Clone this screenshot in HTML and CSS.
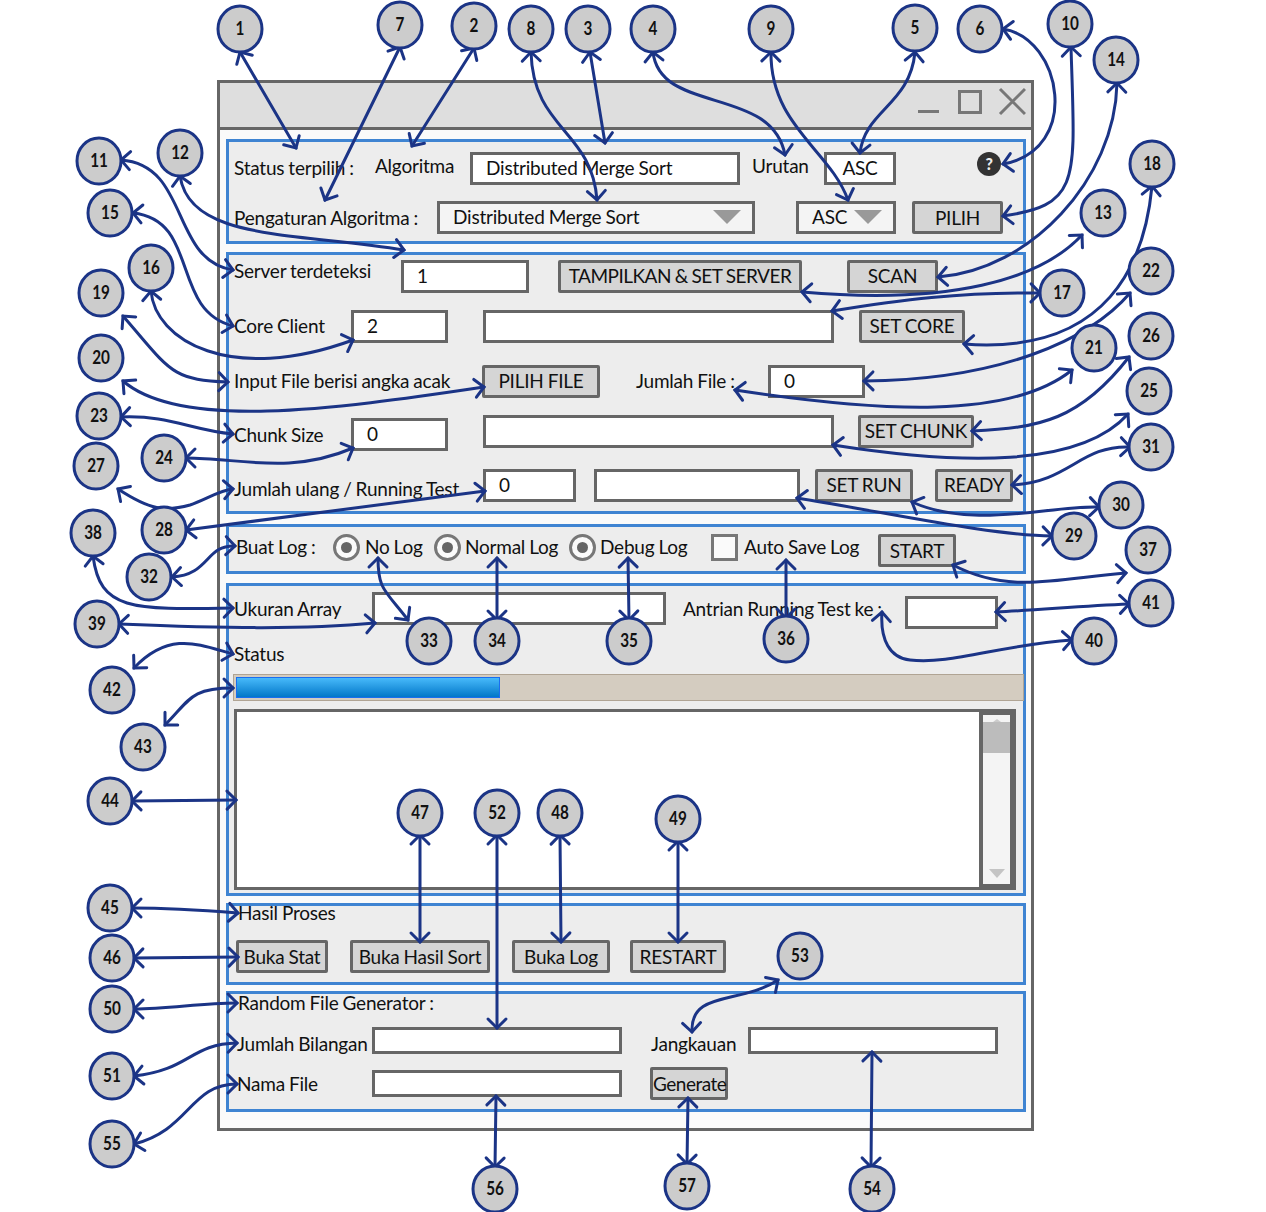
FILE: index.html
```html
<!DOCTYPE html>
<html lang="id">
<head>
<meta charset="utf-8">
<title>Antarmuka Distributed Merge Sort</title>
<link rel="stylesheet" href="styles.css">
</head>
<body>
<div class="stage">
  <div class="window">
    <div class="titlebar">
      <svg class="winctl" width="110" height="44" viewBox="0 0 110 44">
        <path d="M2 28.500H23" class="ctl"/>
        <rect x="43.500" y="8.500" width="21" height="21" class="ctl"/>
        <path d="M84 6L109 31M109 6L84 31" class="ctl"/>
      </svg>
    </div>

    <section class="panel p1">
      <div class="row">
        <span class="w141 up2">Status terpilih :</span>
        <span class="w95 up5">Algoritma</span>
        <div class="field w270">Distributed Merge Sort</div>
        <span class="ml12 w72 up5">Urutan</span>
        <div class="field center w72">ASC</div>
        <span class="help ml81">?</span>
      </div>
      <div class="row mt16">
        <span class="w203">Pengaturan Algoritma :</span>
        <div class="field combo w318">Distributed Merge Sort<i class="tri"></i></div>
        <div class="field combo short ml41 w100">ASC<i class="tri"></i></div>
        <button class="btn ml16 w91">PILIH</button>
      </div>
    </section>

    <section class="panel p2">
      <div class="row">
        <span class="w167 up10">Server terdeteksi</span>
        <div class="field w128">1</div>
        <button class="btn ml29 w244 tamp">TAMPILKAN &amp; SET SERVER</button>
        <button class="btn ml45 w91">SCAN</button>
      </div>
      <div class="row mt16">
        <span class="w117">Core Client</span>
        <div class="field w97">2</div>
        <div class="field ml35 w351"></div>
        <button class="btn ml25 w106">SET CORE</button>
      </div>
      <div class="row mt21">
        <span class="w248">Input File berisi angka acak</span>
        <button class="btn w118">PILIH FILE</button>
        <span class="ml36 w132">Jumlah File :</span>
        <div class="field w97">0</div>
      </div>
      <div class="row mt16">
        <span class="w117 dn8">Chunk Size</span>
        <div class="field w97 shift">0</div>
        <div class="field ml35 w351"></div>
        <button class="btn ml24 w116">SET CHUNK</button>
      </div>
      <div class="row mt20">
        <span class="w249 dn8">Jumlah ulang / Running Test</span>
        <div class="field w93">0</div>
        <div class="field ml18 w206"></div>
        <button class="btn ml15 w98">SET RUN</button>
        <button class="btn ml22 w78">READY</button>
      </div>
    </section>

    <section class="panel p3">
      <div class="row logs">
        <span class="w97">Buat Log :</span>
        <span class="radio"></span><span class="ml5 w69">No Log</span>
        <span class="radio"></span><span class="ml4 w104">Normal Log</span>
        <span class="radio"></span><span class="ml4 w111">Debug Log</span>
        <span class="check"></span><span class="ml6 w134">Auto Save Log</span>
        <button class="btn w78">START</button>
      </div>
    </section>

    <section class="panel p4">
      <div class="row top">
        <span class="w138 lift">Ukuran Array</span>
        <div class="field w294"></div>
        <span class="ml17 w222 lift">Antrian Running Test ke :</span>
        <div class="field w93 mt4"></div>
      </div>
      <div class="status">Status</div>
      <div class="progress"><div class="bar"></div></div>
      <div class="logbox">
        <div class="scroll">
          <i class="up"></i>
          <div class="thumb"></div>
          <i class="down"></i>
        </div>
      </div>
    </section>

    <section class="panel p5">
      <div class="cap">Hasil Proses</div>
      <div class="row btnrow">
        <button class="btn w92">Buka Stat</button>
        <button class="btn ml22 w140">Buka Hasil Sort</button>
        <button class="btn ml22 w98">Buka Log</button>
        <button class="btn ml20 w96">RESTART</button>
      </div>
    </section>

    <section class="panel p6">
      <div class="cap">Random File Generator :</div>
      <div class="row low mt15">
        <span class="w135 dn6">Jumlah Bilangan</span>
        <div class="field w250"></div>
        <span class="ml29 w97 dn6">Jangkauan</span>
        <div class="field w250"></div>
      </div>
      <div class="row mt13">
        <span class="w135">Nama File</span>
        <div class="field low w250"></div>
        <button class="btn ml28 w78 tight">Generate</button>
      </div>
    </section>
  </div>

  <svg class="notes" width="1266" height="1212" viewBox="0 0 1266 1212">
    <defs>
      <marker id="head" markerUnits="userSpaceOnUse" markerWidth="24" markerHeight="24" refX="16" refY="12" orient="auto-start-reverse">
        <path d="M7 3L16 12L7 21" class="headline"/>
      </marker>
    </defs>
    <g class="arrows">
      <path d="M240 52L296 148"/>
      <path d="M400 47L325 200"/>
      <path d="M474 48L412 146"/>
      <path d="M531 52C533 130 592 130 597 200"/>
      <path d="M590 52L605 143"/>
      <path d="M653 52C660 115 772 85 785 155"/>
      <path d="M771 52C770 125 830 150 848 200"/>
      <path d="M915 52C910 105 865 110 860 153"/>
      <path d="M1003 29C1062 38 1082 150 1003 164"/>
      <path d="M1071 47C1075 180 1082 205 1003 216"/>
      <path d="M1117 83C1115 180 1030 270 938 277"/>
      <path d="M1082 235C1040 280 950 305 802 292"/>
      <path d="M1040 293C960 292 900 300 832 311"/>
      <path d="M1152 186C1145 260 1110 355 964 344"/>
      <path d="M1130 293C1090 340 1000 380 864 381"/>
      <path d="M1072 370C1010 420 880 412 735 390"/>
      <path d="M1129 357C1080 420 1040 428 972 431"/>
      <path d="M1128 414C1080 468 960 465 833 445"/>
      <path d="M1130 447C1080 445 1070 482 1012 485"/>
      <path d="M1099 507C1050 505 975 530 912 502"/>
      <path d="M1052 536C990 535 900 515 797 498"/>
      <path d="M1126 573C1060 578 1010 595 953 565"/>
      <path d="M1129 604C1080 606 1040 610 996 612"/>
      <path d="M1072 640C1000 645 950 665 910 660C890 658 880 640 882 612"/>
      <path d="M121 160C190 165 170 260 233 270"/>
      <path d="M180 176C190 240 290 232 404 250"/>
      <path d="M133 213C200 220 170 310 233 326"/>
      <path d="M151 291C155 340 230 385 353 340"/>
      <path d="M123 316C170 370 170 380 228 382"/>
      <path d="M123 381C180 430 330 410 484 387"/>
      <path d="M121 417C170 415 190 430 233 434"/>
      <path d="M186 458C240 458 290 475 353 448"/>
      <path d="M118 489C150 510 165 512 190 505C205 500 220 490 233 489"/>
      <path d="M186 530L485 491"/>
      <path d="M93 556C100 610 130 610 233 608"/>
      <path d="M172 577C210 575 205 545 235 546"/>
      <path d="M119 624C220 628 300 630 375 623"/>
      <path d="M378 558C378 590 385 590 408 620"/>
      <path d="M497 558L497 620"/>
      <path d="M628 558L629 620"/>
      <path d="M786 560L786 618"/>
      <path d="M134 668C170 630 200 645 233 654"/>
      <path d="M165 725C190 700 190 688 233 688"/>
      <path d="M132 801L236 800"/>
      <path d="M420 835L420 942"/>
      <path d="M497 835L497 1028"/>
      <path d="M560 835L561 942"/>
      <path d="M678 841L678 942"/>
      <path d="M132 908C170 908 200 910 238 913"/>
      <path d="M134 958L238 957"/>
      <path d="M134 1009C170 1009 200 1003 237 1003"/>
      <path d="M134 1076C190 1070 190 1044 237 1043"/>
      <path d="M134 1144C190 1130 190 1084 237 1084"/>
      <path d="M495 1167L496 1096"/>
      <path d="M687 1164L688 1098"/>
      <path d="M871 1167L872 1052"/>
      <path d="M778 980C740 1005 690 990 692 1032"/>
    </g>
    <g class="nodes">
      <ellipse cx="240" cy="29" rx="22" ry="23"/><text x="240" y="29">1</text>
      <ellipse cx="400" cy="25" rx="22" ry="23"/><text x="400" y="25">7</text>
      <ellipse cx="474" cy="26" rx="22" ry="23"/><text x="474" y="26">2</text>
      <ellipse cx="531" cy="29" rx="22" ry="23"/><text x="531" y="29">8</text>
      <ellipse cx="588" cy="29" rx="22" ry="23"/><text x="588" y="29">3</text>
      <ellipse cx="653" cy="29" rx="22" ry="23"/><text x="653" y="29">4</text>
      <ellipse cx="771" cy="29" rx="22" ry="23"/><text x="771" y="29">9</text>
      <ellipse cx="915" cy="28" rx="22" ry="23"/><text x="915" y="28">5</text>
      <ellipse cx="980" cy="29" rx="22" ry="23"/><text x="980" y="29">6</text>
      <ellipse cx="1070" cy="24" rx="22" ry="23"/><text x="1070" y="24">10</text>
      <ellipse cx="1116" cy="60" rx="22" ry="23"/><text x="1116" y="60">14</text>
      <ellipse cx="1152" cy="164" rx="22" ry="23"/><text x="1152" y="164">18</text>
      <ellipse cx="1103" cy="213" rx="22" ry="23"/><text x="1103" y="213">13</text>
      <ellipse cx="1151" cy="271" rx="22" ry="23"/><text x="1151" y="271">22</text>
      <ellipse cx="1062" cy="293" rx="22" ry="23"/><text x="1062" y="293">17</text>
      <ellipse cx="1151" cy="336" rx="22" ry="23"/><text x="1151" y="336">26</text>
      <ellipse cx="1094" cy="348" rx="22" ry="23"/><text x="1094" y="348">21</text>
      <ellipse cx="1149" cy="391" rx="22" ry="23"/><text x="1149" y="391">25</text>
      <ellipse cx="1151" cy="447" rx="22" ry="23"/><text x="1151" y="447">31</text>
      <ellipse cx="1121" cy="505" rx="22" ry="23"/><text x="1121" y="505">30</text>
      <ellipse cx="1074" cy="536" rx="22" ry="23"/><text x="1074" y="536">29</text>
      <ellipse cx="1148" cy="550" rx="22" ry="23"/><text x="1148" y="550">37</text>
      <ellipse cx="1151" cy="603" rx="22" ry="23"/><text x="1151" y="603">41</text>
      <ellipse cx="1094" cy="641" rx="22" ry="23"/><text x="1094" y="641">40</text>
      <ellipse cx="99" cy="161" rx="22" ry="23"/><text x="99" y="161">11</text>
      <ellipse cx="180" cy="153" rx="22" ry="23"/><text x="180" y="153">12</text>
      <ellipse cx="110" cy="213" rx="22" ry="23"/><text x="110" y="213">15</text>
      <ellipse cx="151" cy="268" rx="22" ry="23"/><text x="151" y="268">16</text>
      <ellipse cx="101" cy="293" rx="22" ry="23"/><text x="101" y="293">19</text>
      <ellipse cx="101" cy="358" rx="22" ry="23"/><text x="101" y="358">20</text>
      <ellipse cx="99" cy="416" rx="22" ry="23"/><text x="99" y="416">23</text>
      <ellipse cx="164" cy="458" rx="22" ry="23"/><text x="164" y="458">24</text>
      <ellipse cx="96" cy="466" rx="22" ry="23"/><text x="96" y="466">27</text>
      <ellipse cx="164" cy="530" rx="22" ry="23"/><text x="164" y="530">28</text>
      <ellipse cx="93" cy="533" rx="22" ry="23"/><text x="93" y="533">38</text>
      <ellipse cx="149" cy="577" rx="22" ry="23"/><text x="149" y="577">32</text>
      <ellipse cx="97" cy="624" rx="22" ry="23"/><text x="97" y="624">39</text>
      <ellipse cx="429" cy="641" rx="22" ry="23"/><text x="429" y="641">33</text>
      <ellipse cx="497" cy="641" rx="22" ry="23"/><text x="497" y="641">34</text>
      <ellipse cx="629" cy="641" rx="22" ry="23"/><text x="629" y="641">35</text>
      <ellipse cx="786" cy="639" rx="22" ry="23"/><text x="786" y="639">36</text>
      <ellipse cx="112" cy="690" rx="22" ry="23"/><text x="112" y="690">42</text>
      <ellipse cx="143" cy="747" rx="22" ry="23"/><text x="143" y="747">43</text>
      <ellipse cx="110" cy="801" rx="22" ry="23"/><text x="110" y="801">44</text>
      <ellipse cx="420" cy="813" rx="22" ry="23"/><text x="420" y="813">47</text>
      <ellipse cx="497" cy="813" rx="22" ry="23"/><text x="497" y="813">52</text>
      <ellipse cx="560" cy="813" rx="22" ry="23"/><text x="560" y="813">48</text>
      <ellipse cx="678" cy="819" rx="22" ry="23"/><text x="678" y="819">49</text>
      <ellipse cx="110" cy="908" rx="22" ry="23"/><text x="110" y="908">45</text>
      <ellipse cx="112" cy="958" rx="22" ry="23"/><text x="112" y="958">46</text>
      <ellipse cx="800" cy="956" rx="22" ry="23"/><text x="800" y="956">53</text>
      <ellipse cx="112" cy="1009" rx="22" ry="23"/><text x="112" y="1009">50</text>
      <ellipse cx="112" cy="1076" rx="22" ry="23"/><text x="112" y="1076">51</text>
      <ellipse cx="112" cy="1144" rx="22" ry="23"/><text x="112" y="1144">55</text>
      <ellipse cx="495" cy="1189" rx="22" ry="23"/><text x="495" y="1189">56</text>
      <ellipse cx="687" cy="1186" rx="22" ry="23"/><text x="687" y="1186">57</text>
      <ellipse cx="872" cy="1189" rx="22" ry="23"/><text x="872" y="1189">54</text>
    </g>
  </svg>
</div>
</body>
</html>
```

FILE: styles.css
```css
* { box-sizing: border-box; }
html, body { margin: 0; padding: 0; background: #fff; }
body { font: 19px/24px Lato, "Open Sans", sans-serif; letter-spacing: -0.22px; word-spacing: -0.6px; color: #111; }
.stage { position: relative; width: 1266px; height: 1212px; overflow: hidden; }

.window { position: absolute; left: 217px; top: 80px; width: 817px; height: 1051px; border: 3px solid #666; background: #fafafa; }
.titlebar { height: 47px; background: #dedede; border-bottom: 3px solid #666; display: flex; justify-content: flex-end; }
.winctl { margin: 0 5px 0 0; flex: none; }
.ctl { fill: none; stroke: #777; stroke-width: 3; }

.panel { margin: 8px 0 0 6px; width: 800px; border: 3px solid #3f84d2; background: #ededed; padding-left: 5px; }
.p1 { margin-top: 9px; height: 105px; padding-top: 10px; }
.p2 { height: 262px; padding-top: 4px; }
.p2 .row { height: 34px; }
.p3 { margin-top: 10px; height: 50px; padding: 7px 0 0 7px; }
.p4 { margin-top: 9px; height: 313px; padding: 6px 0 0 5px; }
.p5 { margin-top: 7px; height: 82px; padding-left: 7px; }
.p6 { margin-top: 6px; height: 121px; padding-left: 8px; }

.row { display: flex; align-items: center; height: 33px; white-space: nowrap; }
.row.top { align-items: flex-start; }
.row.low { height: 27px; }
.row.low .field { height: 27px; }
.row > span { flex: none; }
.lift { line-height: 33px; }
.logs > span { margin-bottom: 7px; }

.up2 { margin-bottom: 2px; } .up5 { margin-bottom: 5px; } .up10 { margin-bottom: 10px; }
.dn6 { margin-top: 6px; } .dn8 { margin-top: 8px; }

.field { flex: none; height: 33px; border: 3px solid #666; background: #fff; padding-left: 13px; line-height: 25px; }
.field.low { height: 27px; line-height: 21px; }
.field.center { padding: 0; text-align: center; }
.field.combo { position: relative; background: #f4f4f4; }
.tri { position: absolute; right: 11px; top: 6px; width: 0; height: 0; border-left: 14px solid transparent; border-right: 14px solid transparent; border-top: 14px solid #999; }
.shift { margin-top: 6px; }

.btn { flex: none; height: 33px; border: 3px solid #666; border-radius: 2px; background: #d5d5d5; font: inherit; letter-spacing: inherit; word-spacing: inherit; color: #111; padding: 0; text-align: center; }
.tight { letter-spacing: -0.5px; }
.tamp { letter-spacing: -0.5px; }

.help { width: 24px; height: 24px; border-radius: 50%; background: #333; color: #eee; font-weight: 900; font-size: 16px; line-height: 24px; text-align: center; margin-bottom: 10px; }

.radio { width: 27px; height: 27px; border: 3px solid #777; border-radius: 50%; background: #fafafa; display: flex; align-items: center; justify-content: center; }
.radio::after { content: ""; width: 11px; height: 11px; border-radius: 50%; background: #666; }
.check { width: 27px; height: 27px; border: 3px solid #777; background: #fafafa; }

.status { height: 28px; line-height: 28px; margin-top: 15px; }
.progress { margin: 6px 0 0 -1px; width: 791px; height: 27px; border: 1px solid #b0a494; background: #d4ccc0; padding: 2px; }
.bar { width: 264px; height: 21px; border: 1px solid #1a6ef0; background: linear-gradient(#47b9fa, #0277c8); }
.logbox { margin-top: 8px; width: 782px; height: 181px; border: 3px solid #666; background: #fff; display: flex; justify-content: flex-end; }
.scroll { width: 34px; border: 3px solid #666; border-left-width: 4px; background: #f4f4f4; display: flex; flex-direction: column; align-items: center; padding-top: 4px; }
.up { flex: none; width: 0; height: 0; border-left: 4px solid transparent; border-right: 4px solid transparent; border-bottom: 3px solid #ccc; }
.thumb { flex: none; width: 100%; height: 31px; background: #bcbcbc; }
.down { flex: none; width: 0; height: 0; margin-top: auto; margin-bottom: 6px; border-left: 8px solid transparent; border-right: 8px solid transparent; border-top: 9px solid #c4c4c4; }

.cap { height: 18px; line-height: 18px; margin-left: 1px; }
.p5 .cap { height: 14px; line-height: 14px; margin-left: 2px; }
.btnrow { margin-top: 20px; }

.mt4 { margin-top: 4px; } .mt13 { margin-top: 13px; } .mt15 { margin-top: 15px; } .mt16 { margin-top: 16px; } .mt20 { margin-top: 20px; } .mt21 { margin-top: 21px; }
.ml4 { margin-left: 4px; } .ml5 { margin-left: 5px; } .ml6 { margin-left: 6px; } .ml12 { margin-left: 12px; } .ml15 { margin-left: 15px; } .ml16 { margin-left: 16px; } .ml17 { margin-left: 17px; } .ml18 { margin-left: 18px; } .ml20 { margin-left: 20px; } .ml22 { margin-left: 22px; } .ml24 { margin-left: 24px; } .ml25 { margin-left: 25px; } .ml28 { margin-left: 28px; } .ml29 { margin-left: 29px; } .ml35 { margin-left: 35px; } .ml36 { margin-left: 36px; } .ml41 { margin-left: 41px; } .ml45 { margin-left: 45px; } .ml81 { margin-left: 81px; }
.w69 { width: 69px; } .w72 { width: 72px; } .w78 { width: 78px; } .w91 { width: 91px; } .w92 { width: 92px; } .w93 { width: 93px; } .w95 { width: 95px; } .w96 { width: 96px; } .w97 { width: 97px; } .w98 { width: 98px; } .w100 { width: 100px; } .w104 { width: 104px; } .w106 { width: 106px; } .w111 { width: 111px; } .w116 { width: 116px; } .w117 { width: 117px; } .w118 { width: 118px; } .w128 { width: 128px; } .w132 { width: 132px; } .w134 { width: 134px; } .w135 { width: 135px; } .w138 { width: 138px; } .w140 { width: 140px; } .w141 { width: 141px; } .w167 { width: 167px; } .w203 { width: 203px; } .w206 { width: 206px; } .w222 { width: 222px; } .w244 { width: 244px; } .w248 { width: 248px; } .w249 { width: 249px; } .w250 { width: 250px; } .w270 { width: 270px; } .w294 { width: 294px; } .w318 { width: 318px; } .w351 { width: 351px; }

.notes { position: absolute; left: 0; top: 0; pointer-events: none; }
.arrows path { fill: none; stroke: #1b3486; stroke-width: 3; stroke-linecap: round; marker-start: url(#head); marker-end: url(#head); }
.headline { fill: none; stroke: #1b3486; stroke-width: 3; stroke-linecap: round; }
.nodes ellipse { fill: #cccccc; stroke: #1b3486; stroke-width: 3; }
.nodes text { font: 700 18px Lato, sans-serif; letter-spacing: 0; word-spacing: 0; fill: #111; text-anchor: middle; dominant-baseline: central; transform-box: fill-box; transform-origin: center; transform: scaleX(0.85); }
```
